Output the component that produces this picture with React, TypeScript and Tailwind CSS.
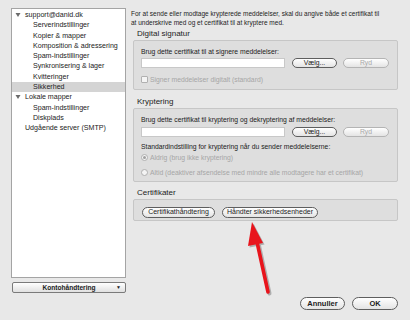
import React from 'react';

const tree = [
  { label: 'support@danid.dk', level: 0, caret: true },
  { label: 'Serverindstillinger', level: 1 },
  { label: 'Kopier & mapper', level: 1 },
  { label: 'Komposition & adressering', level: 1 },
  { label: 'Spam-indstillinger', level: 1 },
  { label: 'Synkronisering & lager', level: 1 },
  { label: 'Kvitteringer', level: 1 },
  { label: 'Sikkerhed', level: 1, selected: true },
  { label: 'Lokale mapper', level: 0, caret: true },
  { label: 'Spam-indstillinger', level: 1 },
  { label: 'Diskplads', level: 1 },
  { label: 'Udgående server (SMTP)', level: 0 },
];

function Caret() {
  return (
    <svg width="6" height="6" viewBox="0 0 6 6" className="absolute left-[3px] top-[2px]">
      <polygon points="0.5,1 5.5,1 3,5" fill="#6b6b6b" />
    </svg>
  );
}

function AquaButton({ label, w, disabled = false, h = 'h-[10px]' }: { label: string; w: string; disabled?: boolean; h?: string }) {
  return (
    <div
      className={`${w} ${h} rounded-full border flex items-center justify-center whitespace-nowrap bg-gradient-to-b from-white to-[#e4e4e4] ${
        disabled ? 'border-[#b4b4b4] text-[#a8a8a8]' : 'border-[#5e5e5e] text-[#1c1c1c]'
      }`}
    >
      {label}
    </div>
  );
}

function Radio({ checked }: { checked?: boolean }) {
  return (
    <div className="w-[7px] h-[7px] rounded-full border border-[#b0b0b0] bg-[#f4f4f4] flex items-center justify-center mr-[2px]">
      {checked && <div className="w-[3px] h-[3px] rounded-full bg-[#a0a0a0]" />}
    </div>
  );
}

export default function App() {
  return (
    <div className="w-[410px] h-[320px] bg-[#e8e8e8] relative overflow-hidden font-['Liberation_Sans',Arial,sans-serif] text-[#1c1c1c]">
      <div className="flex">
        {/* Account tree */}
        <div className="pl-[11px] pt-[8px] w-[131px]">
          <div className="w-[115px] h-[270px] bg-white border border-[#a4a4a4] pt-[1px] text-[7.1px] text-[#222]">
            {tree.map((item, i) => (
              <div
                key={i}
                className={`relative h-[10.3px] leading-[10.3px] whitespace-nowrap ${item.selected ? 'bg-[#d4d4d4]' : ''} ${
                  item.level === 0 ? 'pl-[13px]' : 'pl-[21px]'
                }`}
              >
                {item.caret && <Caret />}
                {item.label}
              </div>
            ))}
          </div>
          <div className="mt-[4px] w-[114px] h-[11px] ml-[1px] border border-[#7a7a7a] rounded-[2px] bg-gradient-to-b from-white to-[#e0e0e0] text-[6.6px] font-bold flex items-center relative">
            <span className="flex-1 text-center">Kontohåndtering</span>
            <span className="absolute right-[4px] text-[5px]">▼</span>
          </div>
        </div>

        {/* Security settings */}
        <div className="pt-[9px] w-[272px]">
          <p className="text-[6.5px] leading-[9px] whitespace-nowrap">
            For at sende eller modtage krypterede meddelelser, skal du angive både et certifikat til
            <br />
            at underskrive med og et certifikat til at kryptere med.
          </p>

          <div className="mt-[2px] pl-[6px] text-[8px] leading-[10px]">Digital signatur</div>
          <div className="mt-[1px] ml-[2px] w-[265px] h-[50px] bg-[#dedede] border border-[#c6c6c6] rounded-[2px] pt-[6px] pl-[7px] text-[6.8px] whitespace-nowrap">
            <div className="leading-[9px]">Brug dette certifikat til at signere meddelelser:</div>
            <div className="mt-[2px] flex items-center">
              <div className="w-[144px] h-[10px] bg-white border border-[#c8c8c8]" />
              <div className="ml-[7px]">
                <AquaButton label="Vælg..." w="w-[45px]" />
              </div>
              <div className="ml-[6px]">
                <AquaButton label="Ryd" w="w-[46px]" disabled />
              </div>
            </div>
            <div className="mt-[7px] flex items-center leading-[9px] text-[#a6a6a6]">
              <div className="w-[7px] h-[7px] border border-[#b0b0b0] bg-[#f4f4f4] rounded-[1px] mr-[2px]" />
              Signer meddelelser digitalt (standard)
            </div>
          </div>

          <div className="mt-[7px] pl-[6px] text-[8px] leading-[10px]">Kryptering</div>
          <div className="mt-[1px] ml-[2px] w-[265px] h-[74px] bg-[#dedede] border border-[#c6c6c6] rounded-[2px] pt-[6px] pl-[7px] text-[6.8px] whitespace-nowrap">
            <div className="leading-[9px]">Brug dette certifikat til kryptering og dekryptering af meddelelser:</div>
            <div className="mt-[3px] flex items-center">
              <div className="w-[144px] h-[10px] bg-white border border-[#c8c8c8]" />
              <div className="ml-[7px]">
                <AquaButton label="Vælg..." w="w-[45px]" />
              </div>
              <div className="ml-[6px]">
                <AquaButton label="Ryd" w="w-[46px]" disabled />
              </div>
            </div>
            <div className="mt-[5px] leading-[9px]">Standardindstilling for kryptering når du sender meddelelserne:</div>
            <div className="mt-[2px] flex items-center leading-[9px] text-[#a6a6a6]">
              <Radio checked />
              Aldrig (brug ikke kryptering)
            </div>
            <div className="mt-[6px] flex items-center leading-[9px] text-[#a6a6a6]">
              <Radio />
              Altid (deaktiver afsendelse med mindre alle modtagere har et certifikat)
            </div>
          </div>

          <div className="mt-[6px] pl-[6px] text-[8px] leading-[10px]">Certifikater</div>
          <div className="mt-[1px] ml-[2px] w-[265px] h-[22px] bg-[#dedede] border border-[#c6c6c6] rounded-[2px] pt-[7px] pl-[8px] text-[7px] flex items-start gap-[7px]">
            <AquaButton label="Certifikathåndtering" w="w-[73px]" h="h-[11px]" />
            <AquaButton label="Håndter sikkerhedsenheder" w="w-[96px]" h="h-[11px]" />
          </div>
        </div>
      </div>

      {/* Dialog buttons */}
      <div className="flex justify-end pr-[12px] mt-[4px] gap-[7px] text-[7.5px] font-bold">
        <AquaButton label="Annuller" w="w-[45px]" h="h-[13px]" />
        <AquaButton label="OK" w="w-[46px]" h="h-[13px]" />
      </div>

      {/* Red annotation arrow */}
      <svg className="absolute left-[240px] top-[215px]" width="40" height="85" viewBox="0 0 40 85">
        <g opacity="0.35" transform="translate(1.5,1.5)">
          <line x1="17" y1="27" x2="28" y2="77" stroke="#444" strokeWidth="4" strokeLinecap="round" />
          <polygon points="12,7 8,31 23,28" fill="#444" />
        </g>
        <line x1="17" y1="27" x2="28" y2="77" stroke="#e8141c" strokeWidth="3.6" strokeLinecap="round" />
        <polygon points="12,7 8,31 23,28" fill="#e8141c" />
      </svg>
    </div>
  );
}
